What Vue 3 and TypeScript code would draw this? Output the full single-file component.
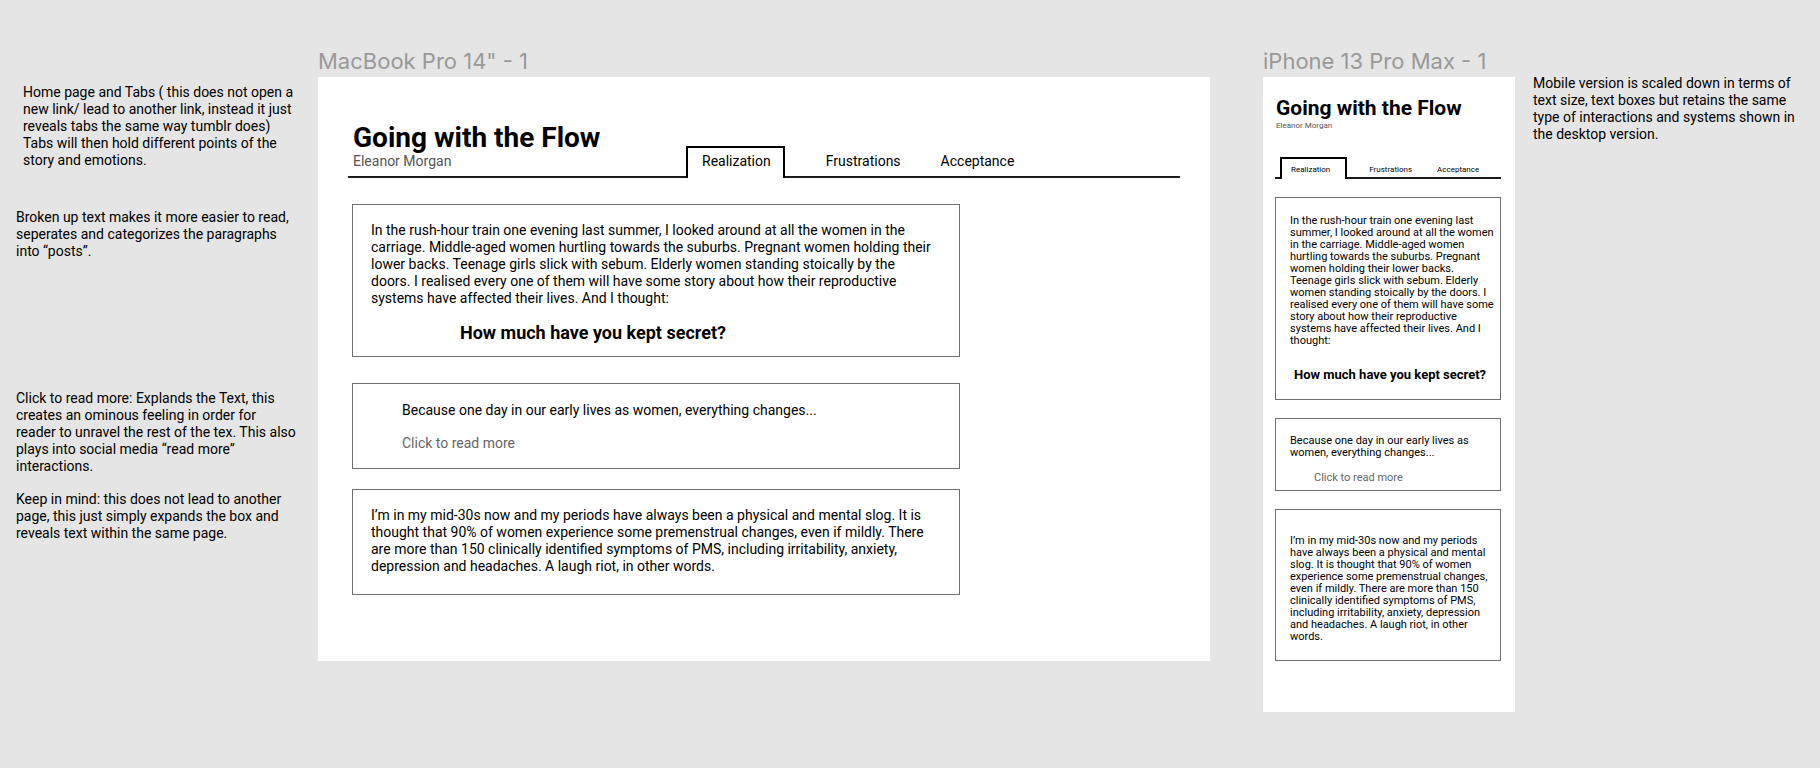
<script setup lang="ts">
import { ref } from 'vue'

interface Device {
  id: 'desktop' | 'phone'
  name: string
}

const devices: Device[] = [
  { id: 'desktop', name: 'MacBook Pro 14" - 1' },
  { id: 'phone', name: 'iPhone 13 Pro Max - 1' },
]

const tabs: string[] = ['Realization', 'Frustrations', 'Acceptance']

const active = ref<Record<string, string>>({ desktop: tabs[0], phone: tabs[0] })
const expanded = ref<Record<string, boolean>>({ desktop: false, phone: false })
</script>

<template>
  <main class="canvas">
    <aside class="notes" aria-label="Desktop notes">
      <p class="note note-tabs">
        Home page and Tabs ( this does not open a new link/ lead to another link, instead it just
        reveals tabs the same way tumblr does) Tabs will then hold different points of the story and
        emotions.
      </p>
      <p class="note note-posts">
        Broken up text makes it more easier to read, seperates and categorizes the paragraphs into
        “posts”.
      </p>
      <p class="note note-more">
        Click to read more: Explands the Text, this creates an ominous feeling in order for reader to
        unravel the rest of the tex. This also plays into social media “read more” interactions.
      </p>
      <p class="note">
        Keep in mind: this does not lead to another page, this just simply expands the box and
        reveals text within the same page.
      </p>
    </aside>

    <section v-for="device in devices" :key="device.id" :class="['artboard', device.id]">
      <h2 class="artboard-name">{{ device.name }}</h2>
      <article class="frame">
        <header class="masthead">
          <div class="heading">
            <h1 class="title">Going with the Flow</h1>
            <p class="author">Eleanor Morgan</p>
          </div>
          <div class="tabs" role="tablist">
            <button
              v-for="tab in tabs"
              :key="tab"
              type="button"
              role="tab"
              :aria-selected="active[device.id] === tab"
              :class="['tab', { active: active[device.id] === tab }]"
              @click="active[device.id] = tab"
            >
              {{ tab }}
            </button>
          </div>
        </header>

        <div class="posts">
          <section class="post post-opening">
            <p>
              In the rush-hour train one evening last summer, I looked around at all the women in the
              carriage. Middle-aged women hurtling towards the suburbs. Pregnant women holding their
              lower backs. Teenage girls slick with sebum. Elderly women standing stoically by the
              doors. I realised every one of them will have some story about how their reproductive
              systems have affected their lives. And I thought:
            </p>
            <h3 class="question">How much have you kept secret?</h3>
          </section>
          <section class="post post-teaser">
            <p>Because one day in our early lives as women, everything changes...</p>
            <button
              type="button"
              class="read-more"
              :aria-expanded="expanded[device.id]"
              @click="expanded[device.id] = !expanded[device.id]"
            >
              Click to read more
            </button>
          </section>
          <section class="post post-closing">
            <p>
              I’m in my mid-30s now and my periods have always been a physical and mental slog. It is
              thought that 90% of women experience some premenstrual changes, even if mildly. There
              are more than 150 clinically identified symptoms of PMS, including irritability,
              anxiety, depression and headaches. A laugh riot, in other words.
            </p>
          </section>
        </div>
      </article>
    </section>

    <aside class="notes notes-mobile" aria-label="Mobile notes">
      <p class="note">
        Mobile version is scaled down in terms of text size, text boxes but retains the same type of
        interactions and systems shown in the desktop version.
      </p>
    </aside>
  </main>
</template>

<style>
body {
  margin: 0;
  background: #e5e5e5;
}
</style>

<style scoped>
.canvas {
  display: grid;
  grid-template-columns: 318fr 892fr 53fr 252fr 305fr;
  align-items: start;
  min-height: 100vh;
  box-sizing: border-box;
  padding-top: 48px;
  color: #000;
  background: #e5e5e5;
  font: 14px/17px Roboto, "Liberation Sans", sans-serif;
}

p,
h1,
h2,
h3 {
  margin: 0;
}

button {
  margin: 0;
  border: 0;
  background: none;
  color: inherit;
  font: inherit;
  text-align: left;
  cursor: pointer;
}

.notes {
  padding: 36px 20px 0 16px;
}

.note-tabs {
  padding-left: 7px;
  margin-bottom: 40px;
}

.note-posts {
  margin-bottom: 130px;
}

.note-more {
  margin-bottom: 16px;
}

.notes-mobile {
  padding: 27px 20px 0 18px;
}

.phone {
  grid-column: 4;
}

.artboard-name {
  height: 29px;
  color: #999;
  font: 22px/26px Inter, sans-serif;
  white-space: nowrap;
}

.frame {
  background: #fff;
}

.masthead {
  border-bottom: 2px solid #1c1a1b;
}

.title {
  font-weight: 700;
  white-space: nowrap;
}

.author {
  color: #555;
}

.tabs {
  display: flex;
  margin-bottom: -2px;
}

.tab {
  border: 2px solid transparent;
  border-bottom: 0;
  white-space: nowrap;
}

.tab.active {
  border-color: #000;
  background: #fff;
}

.posts {
  display: flex;
  flex-direction: column;
}

.post {
  box-sizing: border-box;
  border: 1px solid #707070;
}

.question {
  font-weight: 700;
}

.read-more {
  padding: 0;
  color: #666;
}

/* Desktop artboard */
.desktop .frame {
  padding: 46px 30px 66px;
}

.desktop .masthead {
  display: grid;
  grid-template-columns: 338fr 494fr;
  align-items: end;
}

.desktop .heading {
  padding: 0 0 6px 5px;
}

.desktop .title {
  font-size: 28px;
  line-height: 30px;
}

.desktop .tab {
  padding: 5px 12px 8px 14px;
}

.desktop .tab:first-child {
  margin-right: 25px;
}

.desktop .tab:nth-child(2) {
  margin-right: 10px;
}

.desktop .posts {
  max-width: 608px;
  margin: 26px 0 0 4px;
}

.desktop .post {
  padding: 17px 24px 19px 18px;
}

.desktop .post-opening {
  margin-bottom: 26px;
}

.desktop .question {
  margin: 16px 0 -6px 89px;
  font-size: 18px;
  line-height: 20px;
}

.desktop .post-teaser {
  margin-bottom: 20px;
  padding: 18px 49px 16px;
}

.desktop .read-more {
  margin-top: 16px;
}

/* Phone artboard */
.phone .frame {
  padding: 19px 14px 51px 12px;
  font-size: 11px;
  line-height: 12px;
}

.phone .heading {
  padding-left: 1px;
}

.phone .title {
  font-size: 21px;
  line-height: 24px;
}

.phone .author {
  margin-bottom: 25px;
  font-size: 8px;
  line-height: 12px;
}

.phone .tabs {
  padding-left: 5px;
}

.phone .tab {
  padding: 6px 15px 5px 9px;
  font-size: 8px;
  line-height: 9px;
}

.phone .tab:first-child {
  margin-right: 11px;
}

.phone .tab:last-child {
  padding-left: 6px;
}

.phone .posts {
  margin-top: 18px;
}

.phone .post {
  padding: 17px 4px 16px 14px;
}

.phone .post-opening,
.phone .post-teaser {
  margin-bottom: 18px;
}

.phone .question {
  margin: 20px 0 0 4px;
  font-size: 13px;
  line-height: 16px;
  white-space: nowrap;
}

.phone .post-teaser {
  padding-top: 16px;
  padding-bottom: 6px;
}

.phone .read-more {
  margin: 13px 0 0 24px;
}

.phone .post-closing {
  padding-top: 25px;
  padding-bottom: 17px;
}
</style>
